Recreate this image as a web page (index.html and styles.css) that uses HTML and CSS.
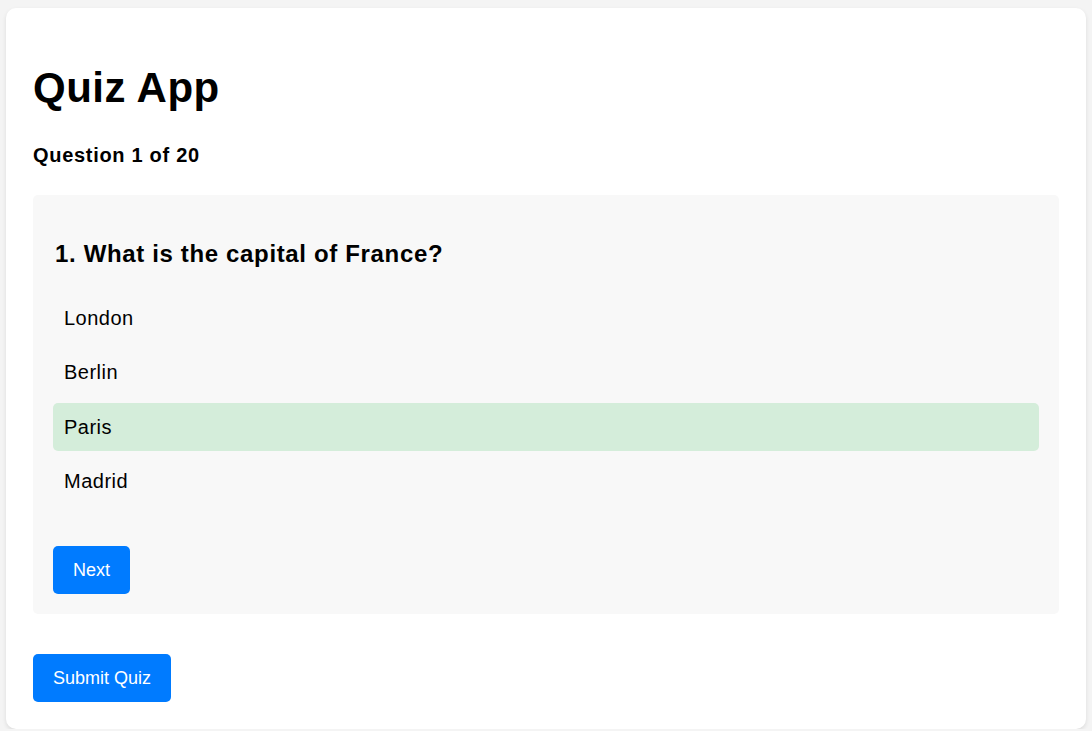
FILE: index.html
```html
<!DOCTYPE html>
<html lang="en">
<head>
<meta charset="utf-8">
<title>Quiz App</title>
<link rel="stylesheet" href="styles.css">
</head>
<body>
<div class="app">
  <h1 class="title">Quiz App</h1>
  <p class="progress">Question 1 of 20</p>
  <div class="question-card">
    <h2 class="question">1. What is the capital of France?</h2>
    <ul class="options">
      <li class="option">London</li>
      <li class="option">Berlin</li>
      <li class="option selected">Paris</li>
      <li class="option">Madrid</li>
    </ul>
    <button class="btn">Next</button>
  </div>
  <button class="btn submit">Submit Quiz</button>
</div>
</body>
</html>
```

FILE: styles.css
```css
html, body {
  margin: 0;
  padding: 0;
}
body {
  background: #f4f4f4;
  font-family: "Liberation Sans", Arial, sans-serif;
  color: #000;
  padding-top: 8px;
}
.app {
  width: 1080px;
  box-sizing: border-box;
  margin: 0 auto;
  background: #fff;
  border-radius: 10px;
  box-shadow: 0 2px 4px rgba(0, 0, 0, 0.1);
  padding: 27px 27px 27px 27px;
}
.title {
  font-size: 42px;
  line-height: 48px;
  font-weight: bold;
  letter-spacing: 0.5px;
  margin: 29px 0 0 0;
}
.progress {
  font-size: 20px;
  line-height: 23px;
  font-weight: bold;
  letter-spacing: 0.7px;
  margin: 32px 0 28px 0;
}
.question-card {
  background: #f8f8f8;
  border-radius: 5px;
  padding: 20px;
  margin-bottom: 40px;
}
.question {
  font-size: 24px;
  line-height: 28px;
  font-weight: bold;
  letter-spacing: 0.65px;
  padding-left: 2px;
  margin: 25px 0 26px 0;
}
.options {
  list-style: none;
  margin: 0 0 41px 0;
  padding: 0;
}
.option {
  font-size: 20px;
  line-height: 24px;
  letter-spacing: 0.5px;
  padding: 12px 11px;
  border-radius: 5px;
  margin-bottom: 6.3px;
}
.option.selected {
  background: #d4edda;
}
.btn {
  display: block;
  font-family: "Liberation Sans", Arial, sans-serif;
  font-size: 18px;
  line-height: 22px;
  padding: 13px 20px;
  border: none;
  border-radius: 5px;
  background: #007bff;
  color: #fff;
  cursor: pointer;
}
```
